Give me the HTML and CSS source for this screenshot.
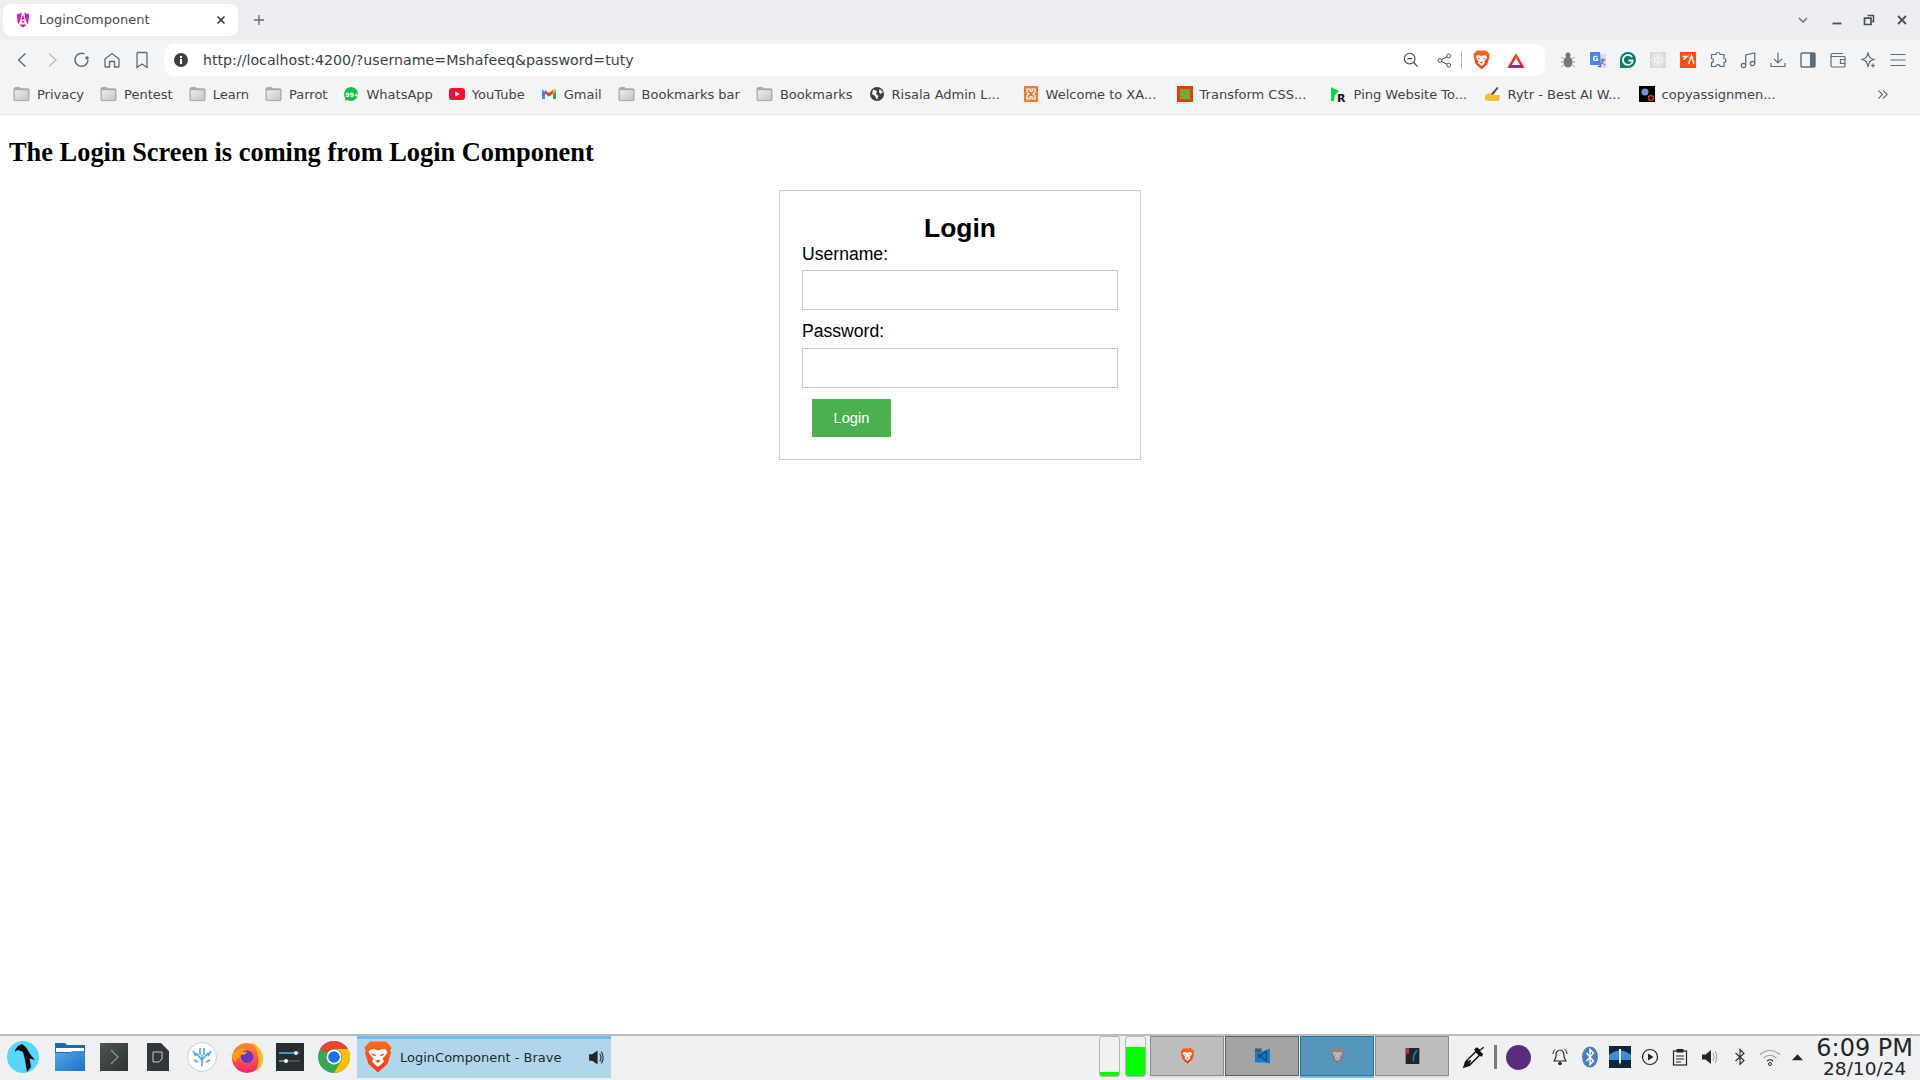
FILE: index.html
```html
<!DOCTYPE html>
<html lang="en">
<head>
<meta charset="utf-8">
<title>LoginComponent</title>
<link rel="stylesheet" href="styles.css">
</head>
<body>
<svg class="defs" width="0" height="0" aria-hidden="true">
  <defs>
    <linearGradient id="bravegrad" x1="0" y1="0" x2="0" y2="1"><stop offset="0" stop-color="#fb6a1e"/><stop offset="1" stop-color="#f23a1a"/></linearGradient>
    <linearGradient id="nggrad" x1="0" y1="1" x2="1" y2="0"><stop offset="0" stop-color="#f5157a"/><stop offset=".55" stop-color="#d91fc0"/><stop offset="1" stop-color="#7a2ff0"/></linearGradient>
    <linearGradient id="foldergrad" x1="0" y1="0" x2="1" y2="1"><stop offset="0" stop-color="#5ea6e0"/><stop offset="1" stop-color="#1672d2"/></linearGradient>
    <linearGradient id="termgrad" x1="0" y1="0" x2="1" y2="1"><stop offset="0" stop-color="#4b5552"/><stop offset="1" stop-color="#2e3433"/></linearGradient>
    <linearGradient id="foxgrad" x1="0" y1="0" x2="0" y2="1"><stop offset="0" stop-color="#ff8a2a"/><stop offset="1" stop-color="#f5216b"/></linearGradient>
    <linearGradient id="foldfill" x1="0" y1="0" x2="1" y2="1"><stop offset="0" stop-color="#ececec"/><stop offset="1" stop-color="#c6c6c6"/></linearGradient>
    <symbol id="folder" viewBox="0 0 18 16">
      <path d="M1 3Q1 1 3 1H7L8.500 2.500H16Q17 2.500 17 3.500V14Q17 15 16 15H2Q1 15 1 14Z" fill="#a9a9a9" stroke="#a0a0a0" stroke-width=".8"/>
      <path d="M1.800 4H16.200V14.200H1.800Z" fill="url(#foldfill)"/>
    </symbol>
    <symbol id="brave" viewBox="0 0 28 32">
      <path d="M6 .5H22L25 3.500L27.500 6.500L26.500 9L27 12L23.500 23L15 30.500Q14 31.500 13 30.500L4.500 23L1 12L1.500 9L.5 6.500L3 3.500Z" fill="url(#bravegrad)"/>
      <path d="M14 9.500L10 8L6.500 8.500L4.500 11L7 15L9.500 17.500L8 20.500L10.500 23L14 26L17.500 23L20 20.500L18.500 17.500L21 15L23.500 11L21.500 8.500L18 8Z" fill="#fff"/>
      <path d="M7.500 12.500L11.500 13.500L12 15L9 14.500ZM20.500 12.500L16.500 13.500L16 15L19 14.500ZM11.500 20L14 18.500L16.500 20L14 22Z" fill="#f4501e"/>
    </symbol>
  </defs>
</svg>

<header class="tabstrip">
  <div class="tab">
    <svg class="tab-icon" viewBox="0 0 16 16"><path d="M6.800 .5L1.800 2.600L2.800 11.500H3.900L5.500 7.500ZM9.200 .5L14.200 2.600L13.200 11.500H12.100L10.500 7.500Z" fill="url(#nggrad)"/><path d="M8 2.500L9.700 7.500H6.300ZM5.500 12.500H10.500L11.300 13.300L8 15.500L4.700 13.300Z" fill="#ef1770"/><path d="M6.700 9H9.300V10.500H6.700Z" fill="#d91fc0"/></svg>
    <span class="tab-title">LoginComponent</span>
    <svg class="tab-close" viewBox="0 0 10 10"><path d="M1.500 1.500L8.500 8.500M8.500 1.500L1.500 8.500" stroke="#3a3f45" stroke-width="1.600"/></svg>
  </div>
  <svg class="new-tab" viewBox="0 0 12 12"><path d="M6 1V11M1 6H11" stroke="#5f6c78" stroke-width="1.300"/></svg>
  <div class="window-controls">
    <svg class="wc wc-down" viewBox="0 0 12 12"><path d="M2 4L6 8L10 4" fill="none" stroke="#5f6c78" stroke-width="1.300"/></svg>
    <svg class="wc wc-min" viewBox="0 0 12 12"><path d="M1.500 9.500H10.500" stroke="#49525a" stroke-width="1.800"/></svg>
    <svg class="wc" viewBox="0 0 12 12"><path d="M4.500 1.500H10.500V7.500H8.500" fill="none" stroke="#49525a" stroke-width="1.500"/><path d="M1.500 4.200H8V10.500H1.500Z" fill="none" stroke="#49525a" stroke-width="1.700"/></svg>
    <svg class="wc" viewBox="0 0 12 12"><path d="M2 2L10 10M10 2L2 10" stroke="#49525a" stroke-width="1.800"/></svg>
  </div>
</header>

<nav class="toolbar">
  <div class="nav-buttons">
    <button class="tb"><svg viewBox="0 0 18 18"><path d="M12.500 2.500L5.500 9L12.500 15.500" fill="none" stroke="#5a6c7a" stroke-width="1.400"/></svg></button>
    <button class="tb"><svg viewBox="0 0 18 18"><path d="M6 2.500L13 9L6 15.500" fill="none" stroke="#b4bcc3" stroke-width="1.400"/></svg></button>
    <button class="tb"><svg viewBox="0 0 18 18"><path d="M15 9A6.500 6.500 0 1 1 11.500 3" fill="none" stroke="#5a6c7a" stroke-width="1.400"/><circle cx="14" cy="7" r="1.700" fill="#5a6c7a"/></svg></button>
    <button class="tb"><svg viewBox="0 0 18 18"><path d="M2 8L9 2.500L16 8V15.500Q16 16 15.500 16H11.500V10.500H6.500V16H2.500Q2 16 2 15.500Z" fill="none" stroke="#5a6c7a" stroke-width="1.300"/></svg></button>
    <button class="tb"><svg viewBox="0 0 18 18"><path d="M4 2.500Q4 1.500 5 1.500H13Q14 1.500 14 2.500V16.500L9 13L4 16.500Z" fill="none" stroke="#5a6c7a" stroke-width="1.300"/></svg></button>
  </div>
  <div class="omnibox">
    <svg class="info" viewBox="0 0 14 14"><circle cx="7" cy="7" r="7" fill="#3c3f43"/><path d="M6 6H8V11H6ZM6 3H8V5H6Z" fill="#fff"/></svg>
    <span class="url">http://localhost:4200/?username=Mshafeeq&amp;password=tuty</span>
    <div class="omni-actions">
      <svg class="oa" viewBox="0 0 18 18"><circle cx="7.500" cy="7.500" r="6" fill="none" stroke="#3c3f43" stroke-width="1.200"/><path d="M4.800 7.500H10.200M12 12L16.500 16.500" stroke="#3c3f43" stroke-width="1.300"/></svg>
      <svg class="oa oa-share" viewBox="0 0 18 18"><circle cx="3.500" cy="9" r="2.300" fill="none" stroke="#3c3f43" stroke-width="1.100"/><circle cx="14" cy="3.500" r="2.300" fill="none" stroke="#3c3f43" stroke-width="1.100"/><circle cx="14" cy="14.500" r="2.300" fill="none" stroke="#3c3f43" stroke-width="1.100"/><path d="M5.500 8L12 4.500M5.500 10L12 13.500" stroke="#3c3f43" stroke-width="1.100"/></svg>
      <span class="oa-sep"></span>
      <svg class="oa-brave"><use href="#brave"/></svg>
      <svg class="oa-bat" viewBox="0 0 20 18"><path d="M10 1L19.500 17H.5Z" fill="#e8292d"/><path d="M.5 17H19.500L15 14H5Z" fill="#8a2a96"/><path d="M10 6L14.500 14H5.500Z" fill="#fff"/><path d="M10 1L14 8L10 6Z" fill="#ff5a1f"/></svg>
    </div>
  </div>
  <div class="extensions">
    <button class="tb"><svg viewBox="0 0 18 18"><ellipse cx="9" cy="11" rx="4.500" ry="5.500" fill="#75787b"/><circle cx="9" cy="4" r="2.500" fill="#75787b"/><path d="M2 6L5 8M1.500 11H5M2 16L5 14M16 6L13 8M16.500 11H13M16 16L13 14" stroke="#a2a5a8"/></svg></button>
    <button class="tb"><svg viewBox="0 0 18 18"><path d="M9 3H17V17H9Z" fill="#d8dbe0"/><path d="M1 1H11L12 14H1Z" fill="#4a86e8"/><path d="M8 16H12V14Z" fill="#2a56a8"/><text x="3.500" y="9.500" class="gt">G</text><path d="M12 9H16.500M14 7.500C14 11 13 13 11.500 14M12.500 10.500C13.500 12.500 15 13.500 16.500 14" fill="none" stroke="#5c6470"/></svg></button>
    <button class="tb"><svg viewBox="0 0 18 18"><path d="M9 1A8 8 0 1 1 9 17H1V9A8 8 0 0 1 9 1Z" fill="#0b7d68"/><path d="M13 6A5 5 0 1 0 13.500 11V9.500H9.500" fill="none" stroke="#fff" stroke-width="1.800"/></svg></button>
    <button class="tb"><svg viewBox="0 0 18 18"><rect x="1" y="1" width="16" height="16" fill="#d8d9da"/><circle cx="9" cy="9" r="1.500" fill="#f3f4f6"/><ellipse cx="9" cy="9" rx="6.500" ry="2.600" fill="none" stroke="#f3f4f6"/><ellipse cx="9" cy="9" rx="6.500" ry="2.600" fill="none" stroke="#f3f4f6" transform="rotate(60 9 9)"/><ellipse cx="9" cy="9" rx="6.500" ry="2.600" fill="none" stroke="#f3f4f6" transform="rotate(120 9 9)"/></svg></button>
    <button class="tb"><svg viewBox="0 0 18 18"><rect x="1" y="1" width="16" height="16" fill="#ff4d12"/><path d="M3.500 5.500H8L4.500 8.500M9.500 13L12.500 4.500L15 13" fill="none" stroke="#fff" stroke-width="1.500"/></svg></button>
    <button class="tb"><svg viewBox="0 0 18 18"><path d="M7 3.500C7 .8 11 .8 11 3.500H15V7.500C17.500 7.500 17.500 11.500 15 11.500V15.500H11C11 13 7 13 7 15.500H2.500V11.500C5 11.500 5 7.500 2.500 7.500V3.500Z" fill="none" stroke="#5a6c7a" stroke-width="1.200"/></svg></button>
    <button class="tb"><svg viewBox="0 0 18 18"><circle cx="4.500" cy="14.500" r="2.200" fill="none" stroke="#5a6c7a" stroke-width="1.200"/><circle cx="13.500" cy="12.500" r="2.200" fill="none" stroke="#5a6c7a" stroke-width="1.200"/><path d="M6.700 14.500V4L15.700 2V12.500" fill="none" stroke="#5a6c7a" stroke-width="1.200"/></svg></button>
    <button class="tb"><svg viewBox="0 0 18 18"><path d="M9 1.500V11.500M5 7.800L9 11.800L13 7.800M2 12V15.500H16V12" fill="none" stroke="#5a6c7a" stroke-width="1.200"/></svg></button>
    <button class="tb"><svg viewBox="0 0 18 18"><rect x="2" y="2" width="14" height="14" rx="1" fill="none" stroke="#5a6c7a" stroke-width="1.400"/><rect x="11" y="2" width="5" height="14" fill="#5a6c7a"/></svg></button>
    <button class="tb"><svg viewBox="0 0 18 18"><path d="M2 5V14.500Q2 16 3.500 16H15Q16 16 16 15V6.500Q16 5.500 15 5.500H3Q2 5.500 2 4.500Q2 2.500 4 2.500H14" fill="none" stroke="#5a6c7a" stroke-width="1.200"/><path d="M16 8.500H11.500V12.500H16" fill="none" stroke="#5a6c7a" stroke-width="1.200"/></svg></button>
    <button class="tb"><svg viewBox="0 0 18 18"><path d="M9 1.500C9.800 6 11 7.500 15.500 8.500C11 9.500 9.800 11 9 16C8.200 11 7 9.500 2.500 8.500C7 7.500 8.200 6 9 1.500Z" fill="none" stroke="#5a6c7a" stroke-width="1.200" stroke-linejoin="round"/><path d="M14 12.500V16.500M12 14.500H16" stroke="#5a6c7a" stroke-width="1.200"/></svg></button>
    <button class="tb"><svg viewBox="0 0 18 18"><path d="M1.500 3.500H16.500M1.500 9H16.500M1.500 14.500H16.500" stroke="#5a6c7a" stroke-width="1.200"/></svg></button>
  </div>
</nav>

<div class="bookmarks">
  <span class="bm"><svg class="bm-icon"><use href="#folder"/></svg>Privacy</span>
  <span class="bm"><svg class="bm-icon"><use href="#folder"/></svg>Pentest</span>
  <span class="bm"><svg class="bm-icon"><use href="#folder"/></svg>Learn</span>
  <span class="bm"><svg class="bm-icon"><use href="#folder"/></svg>Parrot</span>
  <span class="bm"><svg class="bm-icon bm-small" viewBox="0 0 16 16"><circle cx="8" cy="8" r="7" fill="#1ebe4e"/><path d="M2 15L3 10L6 13Z" fill="#1ebe4e"/><text x="2.500" y="10.500" class="wa">99+</text></svg>WhatsApp</span>
  <span class="bm"><svg class="bm-icon bm-small" viewBox="0 0 16 16"><rect y="2" width="16" height="12" rx="3" fill="#f50f2c"/><path d="M6.200 5.300L10.800 8L6.200 10.700Z" fill="#fff"/></svg>YouTube</span>
  <span class="bm"><svg class="bm-icon bm-small" viewBox="0 0 16 16"><path d="M1 3.500L8 9L15 3.500V13H12V7.500L8 10.500L4 7.500V13H1Z" fill="#4285f4"/><path d="M4 7.500L8 10.500L12 7.500V4L8 7L4 4Z" fill="#ea4335"/><path d="M12 4L15 2.800V6L12 7.500Z" fill="#fbbc04"/><path d="M12 7.500L15 6V13H12Z" fill="#34a853"/></svg>Gmail</span>
  <span class="bm"><svg class="bm-icon"><use href="#folder"/></svg>Bookmarks bar</span>
  <span class="bm"><svg class="bm-icon"><use href="#folder"/></svg>Bookmarks</span>
  <span class="bm bm-cut"><svg class="bm-icon bm-small" viewBox="0 0 16 16"><circle cx="8" cy="8" r="7" fill="#3c4043"/><path d="M4 3.500L8 5L7 8L9.500 10L8 14L6 10L3 8ZM10.500 3L14 6L11.500 8L10 6Z" fill="#f3f4f6"/></svg>Risala Admin L...</span>
  <span class="bm bm-cut"><svg class="bm-icon bm-small" viewBox="0 0 16 16"><rect x="1" width="14" height="16" rx="1" fill="#f07a28"/><path d="M4 3H7V5.500H9V3H12V6.500L10 8L12 9.500V13H9V10.500H7V13H4V9.500L6 8L4 6.500Z" fill="none" stroke="#fff" stroke-width="1.200"/></svg>Welcome to XA...</span>
  <span class="bm bm-cut"><svg class="bm-icon bm-small" viewBox="0 0 16 16"><rect width="16" height="16" fill="#ee3b05"/><rect x="3" y="3" width="10" height="10" fill="#72a83f"/></svg>Transform CSS...</span>
  <span class="bm bm-cut"><svg class="bm-icon bm-small" viewBox="0 0 16 16"><path d="M0 1L8 5L4 9L3 15H0Z" fill="#18d44c"/><text x="6" y="15.500" class="pr">R</text></svg>Ping Website To...</span>
  <span class="bm bm-cut"><svg class="bm-icon bm-small" viewBox="0 0 16 16"><path d="M0 9L5 7L9 9H15L14 15H4L0 14Z" fill="#f5be2c"/><path d="M6 8L12 1L13.500 2L8 9Z" fill="#4a4a4a"/></svg>Rytr - Best AI W...</span>
  <span class="bm"><svg class="bm-icon bm-small" viewBox="0 0 16 16"><rect width="16" height="16" fill="#000"/><circle cx="6" cy="6" r="3.500" fill="#7b93d8"/><circle cx="12" cy="12" r="2.500" fill="none" stroke="#e0302a" stroke-width="1.500"/></svg>copyassignmen...</span>
  <svg class="bm-more" viewBox="0 0 12 12"><path d="M1.500 1.500L6 6L1.500 10.500M6.500 1.500L11 6L6.500 10.500" fill="none" stroke="#5a6c7a" stroke-width="1.200"/></svg>
</div>

<main class="page">
  <h2 class="page-title">The Login Screen is coming from Login Component</h2>
  <form class="card">
    <h3 class="card-title">Login</h3>
    <label class="field-label">Username:</label>
    <input class="field" type="text">
    <label class="field-label field-label-2">Password:</label>
    <input class="field field-2" type="password">
    <button class="submit" type="button">Login</button>
  </form>
</main>

<footer class="taskbar">
  <div class="launchers">
    <svg class="lnch l-parrot" viewBox="0 0 32 32"><circle cx="16" cy="16" r="16" fill="#58d5fb"/><path d="M8 9L11 5L15 3Q19 5 23 13L28 19L22.500 17.500L24 26L20 31L18 19L16 11L11 9Q9 9.500 8 11Z" fill="#0c0c10"/></svg>
    <svg class="lnch l-folder" viewBox="0 0 30 28"><path d="M0 0H10L12 2H30V28H0Z" fill="#1f6aa8"/><path d="M1 5H29V9H1Z" fill="#fff"/><path d="M0 10H14L17 8H30V28H0Z" fill="url(#foldergrad)"/></svg>
    <svg class="lnch l-term" viewBox="0 0 28 28"><rect width="28" height="28" fill="url(#termgrad)"/><path d="M11 7L18 14L11 21" fill="none" stroke="#89908d" stroke-width="1.400"/></svg>
    <svg class="lnch l-doc" viewBox="0 0 22 28"><path d="M0 0H14L22 8V28H0Z" fill="#33363a"/><path d="M14 0L22 8" stroke="#9a9c9e"/><path d="M6 9H15V16L12 19H6Z" fill="none" stroke="#c9ccce"/></svg>
    <svg class="lnch l-vs" viewBox="0 0 30 30"><circle cx="15" cy="15" r="14.500" fill="#fff" stroke="#c8ccd0"/><path d="M15 24V13M15 18L9 11M15 18L21 11M9 14L6 9M21 14L24 9M13 13V6M17 13V6M11 20L7 18M19 20L23 18" fill="none" stroke="#4aa3e8" stroke-width="1.600"/></svg>
    <svg class="lnch l-fox" viewBox="0 0 32 32"><circle cx="16" cy="17" r="15" fill="url(#foxgrad)"/><path d="M20 0C28 6 32 11 32 17A15 15 0 0 1 25 30C29 21 28 9 20 0Z" fill="#ffb627"/><path d="M2 12Q7 6 16 8Q12 9 11 11Q16 9 22 14Q24 21 16 23Q9 22 9 16Q6 18 4 21Q0 17 2 12Z" fill="#ff9a1a"/><circle cx="16" cy="16" r="6.500" fill="#6b37c0"/><path d="M10 11H16L14 13.500H9Z" fill="#ffa21a"/></svg>
    <svg class="lnch l-set" viewBox="0 0 28 28"><rect width="28" height="28" fill="#2a2d2f"/><path d="M3 10H24M3 18H24" stroke="#59595c" stroke-width="1.500"/><path d="M3 10H19M3 18H10" stroke="#3daee9" stroke-width="1.500"/><circle cx="20" cy="10" r="2" fill="#fff"/><circle cx="10" cy="18" r="2" fill="#fff"/></svg>
    <svg class="lnch l-chrome" viewBox="0 0 32 32"><circle cx="16" cy="16" r="16" fill="#34a853"/><path d="M16 0A16 16 0 0 1 29.860 8H16A8 8 0 0 0 9.070 12L2.140 8A16 16 0 0 1 16 0Z" fill="#ea4335"/><path d="M29.860 8A16 16 0 0 1 16 32L22.930 20A8 8 0 0 0 16 8Z" fill="#fbbc04"/><circle cx="16" cy="16" r="7.500" fill="#fff"/><circle cx="16" cy="16" r="5.800" fill="#1a73e8"/></svg>
  </div>
  <div class="task">
    <svg class="task-icon"><use href="#brave"/></svg>
    <span class="task-title">LoginComponent - Brave</span>
    <svg class="task-audio" viewBox="0 0 16 16"><path d="M1 5H4L9 1.500V14.500L4 11H1Z" fill="#232629"/><path d="M11 4.500Q13.500 8 11 11.500M12.500 2.500Q16 8 12.500 13.500" fill="none" stroke="#232629"/></svg>
  </div>
  <div class="meters">
    <div class="meter"><div class="meter-fill m-low"></div></div>
    <div class="meter"><div class="meter-fill m-high"></div></div>
  </div>
  <div class="pager">
    <div class="desk"><svg class="desk-icon"><use href="#brave"/></svg></div>
    <div class="desk desk-dark"><svg class="desk-icon" viewBox="0 0 16 16"><path d="M0 4H6L16 0V16L10 15H0Z" fill="#1f78c4"/><path d="M0 0H7V4H0Z" fill="#2b5f8c"/><path d="M3 6L12 13V3L3 10" fill="none" stroke="#0e4c86" stroke-width="1.500"/></svg></div>
    <div class="desk desk-active"><svg class="desk-icon dim"><use href="#brave"/></svg></div>
    <div class="desk"><svg class="desk-icon" viewBox="0 0 12 14"><rect width="12" height="14" fill="#222528"/><rect width="3" height="5" fill="#c0303a"/><path d="M10 2Q6 6 7 12" fill="none" stroke="#1a7ad0" stroke-width="1.500"/></svg></div>
  </div>
  <svg class="picker" viewBox="0 0 26 26"><path d="M2 24L4 18L15 7L19 11L8 22Z" fill="none" stroke="#111" stroke-width="1.500"/><path d="M2 24L4 18L10 16L8 22Z" fill="#111"/><path d="M13 5L21 13L23 10L19.500 6.500L24 3L23 2L19.500 5L16 2.500Z" fill="#111"/></svg>
  <span class="divider"></span>
  <span class="purple"></span>
  <div class="tray">
    <svg class="ti" viewBox="0 0 18 18"><path d="M9 2C13 2 13 6 13 8C13 11 15 12 15 13H3C3 12 5 11 5 8C5 6 5 2 9 2Z" fill="none" stroke="#232629" stroke-width="1.200"/><circle cx="9" cy="15.500" r="1.800" fill="#232629"/><path d="M2 6Q2 3 4 1.500M16 6Q16 3 14 1.500" fill="none" stroke="#232629"/></svg>
    <svg class="ti ti-bt" viewBox="0 0 18 22"><ellipse cx="9" cy="11" rx="8" ry="10.500" fill="#4a7fc4"/><path d="M5.500 7L12.500 15L9 18.500V3.500L12.500 7L5.500 15" fill="none" stroke="#fff" stroke-width="1.400"/></svg>
    <svg class="ti ti-tool" viewBox="0 0 22 22"><rect width="22" height="22" fill="#13233a"/><path d="M0 9Q11 0 22 9V14H0Z" fill="#3f8fd0"/><path d="M10 3H12V16L11 19L10 16Z" fill="#e8f2fa"/></svg>
    <svg class="ti" viewBox="0 0 18 18"><circle cx="9" cy="9" r="7.500" fill="none" stroke="#232629" stroke-width="1.200"/><path d="M7 5.500L12.500 9L7 12.500Z" fill="#232629"/></svg>
    <svg class="ti" viewBox="0 0 18 18"><rect x="2.500" y="3" width="13" height="14" fill="none" stroke="#232629" stroke-width="1.200"/><rect x="5.500" y="1" width="7" height="3.500" fill="#232629"/><path d="M5 8H13M5 11H13M5 14H10" stroke="#232629"/></svg>
    <svg class="ti" viewBox="0 0 18 18"><path d="M1 6.500H4.500L10 2V16L4.500 11.500H1Z" fill="#232629"/><path d="M12 5Q14.500 9 12 13M14 3Q17.500 9 14 15" fill="none" stroke="#9b9d9f"/></svg>
    <svg class="ti" viewBox="0 0 18 18"><path d="M4.500 5L13 12.500L9 16.500V1.500L13 5.500L4.500 13" fill="none" stroke="#232629" stroke-width="1.100"/></svg>
    <svg class="ti ti-wifi" viewBox="0 0 22 18"><path d="M1 6.500Q11 -1.500 21 6.500M4.500 10Q11 4.500 17.500 10" fill="none" stroke="#9b9d9f" stroke-width="1.200"/><path d="M8 13Q11 10.500 14 13" fill="none" stroke="#232629" stroke-width="1.200"/><circle cx="11" cy="16" r="1.500" fill="none" stroke="#232629"/></svg>
    <svg class="ti ti-arrow" viewBox="0 0 14 8"><path d="M1 7.500L7 1L13 7.500Z" fill="#232629"/></svg>
  </div>
  <div class="clock">
    <span class="clock-time">6:09 PM</span>
    <span class="clock-date">28/10/24</span>
  </div>
</footer>
</body>
</html>
```
FILE: styles.css
```css
* { box-sizing: border-box; }
html, body { margin: 0; height: 100%; }
body { width: 1920px; height: 1080px; overflow: hidden; display: flex; flex-direction: column; background: #fff; font-family: "DejaVu Sans", sans-serif; }
.defs { display: block; height: 0; }
svg { display: block; flex: none; }

.tabstrip { height: 40px; background: #eceef2; display: flex; align-items: center; padding: 4px 0 4px 3px; }
.tab { width: 235px; height: 32px; background: #fff; border-radius: 8px; display: flex; align-items: center; padding: 0 12px; flex: none; }
.tab-icon { width: 16px; height: 16px; margin-right: 8px; }
.tab-title { flex: 1; font-size: 13px; color: #45494f; white-space: nowrap; padding-bottom: 1px; }
.tab-close { width: 10px; height: 10px; }
.new-tab { width: 12px; height: 12px; margin-left: 15px; }
.window-controls { margin-left: auto; display: flex; align-items: center; padding-right: 12px; gap: 21px; }
.wc { width: 12px; height: 12px; }
.wc-down { margin-right: 1px; }
.wc-min { margin-right: -1px; }

.toolbar { height: 36px; background: #f3f4f6; display: flex; align-items: flex-start; padding: 4px 7px 0 7px; }
.nav-buttons { display: flex; margin-right: 7px; }
.tb { width: 30px; height: 32px; padding: 0; border: 0; background: none; display: flex; align-items: center; justify-content: center; flex: none; }
.tb svg { width: 18px; height: 18px; }
.omnibox { flex: none; width: 1381px; height: 32px; background: #fff; border-radius: 10px; display: flex; align-items: center; padding: 0 20px 0 10px; }
.info { width: 14px; height: 14px; margin-right: 15px; }
.url { font-size: 14.200px; color: #3a3f45; white-space: nowrap; }
.omni-actions { margin-left: auto; display: flex; align-items: center; }
.oa { width: 16px; height: 16px; }
.oa-share { margin-left: 18px; width: 15px; height: 15px; }
.oa-sep { width: 1px; height: 18px; background: #b8bcc0; margin: 0 11px 0 9px; }
.oa-brave { width: 17px; height: 20px; }
.oa-bat { width: 18px; height: 17px; margin-left: 17px; }
.extensions { display: flex; margin-left: 8px; }

.bookmarks { height: 39px; background: #f3f4f6; border-bottom: 1px solid #e2e4e8; display: flex; align-items: center; padding: 0 32px 2px 13px; gap: 16px; font-size: 13px; color: #3f444a; white-space: nowrap; }
.bm { display: flex; align-items: center; gap: 7px; }
.bm-cut { width: 138px; }
.bm-icon { width: 17px; height: 16px; }
.bm-small { width: 16px; height: 16px; }
.gt { font: bold 7px "DejaVu Sans", sans-serif; fill: #fff; }
.wa { font: bold 6px "DejaVu Sans", sans-serif; fill: #fff; }
.pr { font: bold 11px "DejaVu Sans", sans-serif; fill: #111; }
.bm-more { width: 11px; height: 11px; margin-left: auto; }

.page { flex: 1; min-height: 0; color: #000; font-family: "Liberation Serif", serif; padding: 0 9px; }
.page-title { font-size: 26.400px; font-weight: bold; margin: 21px 0 0; line-height: 32px; }
.card { width: 362px; margin: 22px auto 0; padding: 22px; border: 1px solid #ccc; display: flex; flex-direction: column; align-items: stretch; font-family: "Liberation Sans", sans-serif; }
.card-title { margin: 0; font-size: 26.400px; line-height: 31px; text-align: center; font-weight: bold; }
.field-label { font-size: 17.600px; line-height: 20px; color: #000; }
.field-label-2 { margin-top: 11px; }
.field { height: 40px; border: 1px solid #ccc; margin-top: 6px; padding: 0; background: #fff; width: 100%; }
.field-2 { margin-top: 7px; }
.submit { align-self: flex-start; margin: 11px 0 0 10px; width: 79px; height: 38px; border: 0; background: #4caf50; color: #fff; font: 14.670px "Liberation Sans", sans-serif; padding: 0; }

.taskbar { height: 46px; background: #eff0f1; border-top: 2px solid #bbbcbd; display: flex; align-items: center; flex: none; padding: 0 0 2px 7px; color: #232629; }
.launchers { display: flex; align-items: center; }
.l-parrot { width: 32px; height: 32px; margin-right: 16px; }
.l-folder { width: 30px; height: 28px; margin-right: 15px; }
.l-term { width: 28px; height: 28px; margin-right: 19px; }
.l-doc { width: 22px; height: 28px; margin-right: 18px; }
.l-vs { width: 30px; height: 30px; margin-right: 14px; }
.l-fox { width: 32px; height: 32px; margin-right: 13px; }
.l-set { width: 28px; height: 28px; margin-right: 14px; }
.l-chrome { width: 32px; height: 32px; margin-right: 7px; }
.task { width: 254px; height: 42px; background: #b0d6ec; border-top: 3px solid #6cbde8; display: flex; align-items: center; padding: 0 6px 3px 7px; }
.task-icon { width: 28px; height: 32px; margin-right: 8px; }
.task-title { font-size: 13px; flex: 1; white-space: nowrap; }
.task-audio { width: 17px; height: 17px; }
.meters { display: flex; gap: 5px; margin-left: 488px; align-self: flex-start; }
.meter { width: 21px; height: 41px; border: 1px solid #b5b6b7; border-radius: 3px; background: #eff0f1; display: flex; align-items: flex-end; overflow: hidden; }
.meter-fill { width: 100%; background: #00ff00; }
.m-low { height: 4px; }
.m-high { height: 29px; }
.pager { display: flex; gap: 1px; margin-left: 4px; align-self: flex-start; }
.desk { width: 74px; height: 40px; background: #bcbdbe; border: 1px solid #8a8b8c; display: flex; align-items: center; justify-content: center; box-shadow: 0 2px 0 #e0e1e2; }
.desk-dark { background: #a3a4a5; border-color: #5e5f60; }
.desk-active { background: #5596bb; border-color: #2f6f93; box-shadow: 0 2px 0 #6cbde8; }
.desk-icon { width: 15px; height: 16px; }
.dim { opacity: .45; }
.picker { width: 24px; height: 24px; margin-left: 13px; }
.divider { width: 3px; height: 24px; background: #7a7b7c; margin-left: 8px; }
.purple { width: 25px; height: 25px; border-radius: 50%; background: #5a2d7c; margin-left: 9px; flex: none; }
.tray { display: flex; align-items: center; gap: 12px; margin-left: 20px; }
.ti { width: 18px; height: 18px; }
.ti-bt { height: 22px; }
.ti-tool { width: 22px; height: 22px; margin: 0 -2px; }
.ti-wifi { width: 22px; margin: 0 -2px; }
.ti-arrow { width: 13px; height: 8px; }
.clock { margin-left: auto; padding-right: 7px; display: flex; flex-direction: column; align-items: center; white-space: nowrap; }
.clock-time { font-size: 24px; line-height: 24px; }
.clock-date { font-size: 18.500px; line-height: 18px; }
```
